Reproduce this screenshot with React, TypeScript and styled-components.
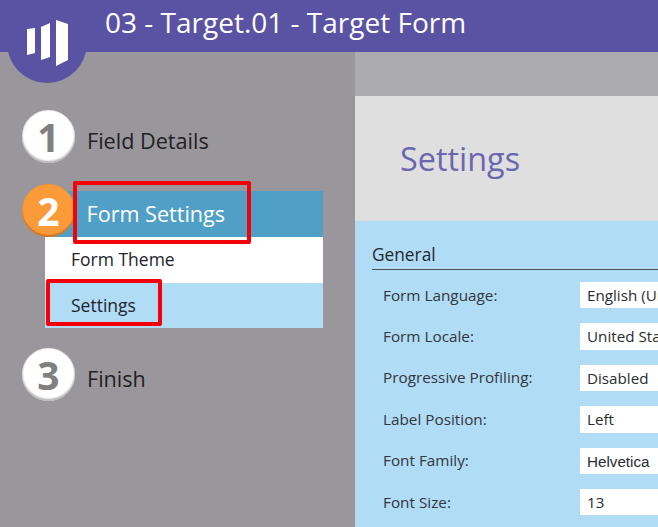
import React from "react";
import styled, { createGlobalStyle } from "styled-components";

const Global = createGlobalStyle`
  html, body { margin: 0; padding: 0; height: 100%; overflow: hidden; }
  body { font-family: "Open Sans", "Liberation Sans", sans-serif; background: #99979c; }
`;

const Page = styled.div`
  position: relative;
  width: 658px;
  height: 527px;
  overflow: hidden;
  display: flex;
  flex-direction: column;
`;

const Header = styled.header`
  height: 52px;
  flex: none;
  background: #5a52a2;
  color: #fff;
  font-size: 28px;
  line-height: 45px;
  padding-left: 105px;
  white-space: nowrap;
`;

const LogoBadge = styled.div`
  position: absolute;
  left: 7px;
  top: 3px;
  width: 80px;
  height: 80px;
  box-sizing: border-box;
  padding-left: 1px;
  border-radius: 50%;
  background: #5a52a2;
  display: flex;
  align-items: center;
  justify-content: center;
`;

const Body = styled.div`
  flex: 1;
  display: flex;
  min-height: 0;
`;

const Sidebar = styled.aside`
  width: 355px;
  flex: none;
  box-sizing: border-box;
  padding: 58px 0 0 22px;
  display: flex;
  flex-direction: column;
`;

const Step = styled.div<{ $mt?: number }>`
  display: flex;
  align-items: center;
  height: 53px;
  margin-top: ${(p) => p.$mt ?? 0}px;
  gap: 12px;
`;

const StepCircle = styled.div<{ $active?: boolean }>`
  width: 53px;
  height: 53px;
  flex: none;
  box-sizing: border-box;
  border-radius: 50%;
  background: ${(p) => (p.$active ? "#fb9a38" : "#fff")};
  box-shadow: ${(p) =>
    p.$active ? "inset 0 -2px 1px #c9752a, inset 0 0 1px #d98a3a" : "inset 0 -2px 2px #b5b5b5, inset 0 0 2px #c4c4c4"};
  color: ${(p) => (p.$active ? "#fff" : "#808080")};
  font-size: 39px;
  font-weight: 700;
  line-height: 53px;
  text-align: center;
`;

const StepLabel = styled.div`
  font-size: 21.6px;
  color: #1f1f24;
  line-height: 30px;
  position: relative;
  top: 4px;
`;

const Wizard = styled.div`
  position: relative;
  margin-top: 21px;
  height: 157px;
`;

const FloatingCircle = styled.div`
  position: absolute;
  left: 0;
  top: 0;
  z-index: 2;
`;

const Panel = styled.div`
  position: absolute;
  left: 23px;
  top: 7px;
  width: 278px;
`;

const PanelHead = styled.div`
  height: 46px;
  box-sizing: border-box;
  padding-left: 41.5px;
  background: #4f9fc6;
  color: #fff;
  font-size: 21.6px;
  line-height: 46px;
`;

const PanelItem = styled.div<{ $selected?: boolean }>`
  height: 45.5px;
  box-sizing: border-box;
  padding-left: 26px;
  background: ${(p) => (p.$selected ? "#b0dcf6" : "#fff")};
  color: #22242c;
  font-size: 17.5px;
  line-height: 45px;
`;

const Callout = styled.div<{ $l: number; $t: number; $w: number; $h: number }>`
  position: absolute;
  left: ${(p) => p.$l}px;
  top: ${(p) => p.$t}px;
  width: ${(p) => p.$w}px;
  height: ${(p) => p.$h}px;
  box-sizing: border-box;
  border: 4px solid #f40009;
  border-radius: 2px;
  z-index: 3;
`;

const Main = styled.main`
  flex: 1;
  display: flex;
  flex-direction: column;
  min-width: 0;
`;

const TopBand = styled.div`
  height: 44px;
  flex: none;
  background: #acabb0;
`;

const TitleBand = styled.div`
  height: 125px;
  flex: none;
  box-sizing: border-box;
  background: #dfdfdf;
  padding-left: 45px;
  color: #6a66b0;
  font-size: 32.4px;
  line-height: 125px;
`;

const Content = styled.div`
  flex: 1;
  background: #b0dcf6;
  padding: 20px 0 0 17px;
  overflow: hidden;
`;

const SectionTitle = styled.div`
  height: 28.5px;
  box-sizing: border-box;
  border-bottom: 1px solid #4a5058;
  color: #25272e;
  font-size: 17.3px;
  line-height: 27.5px;
`;

const Fields = styled.div`
  margin-top: 12.5px;
  display: flex;
  flex-direction: column;
  gap: 15px;
`;

const Row = styled.div`
  display: flex;
  align-items: center;
  height: 26.4px;
  padding-left: 11px;
`;

const Label = styled.div`
  width: 197px;
  flex: none;
  color: #33363a;
  font-size: 15.3px;
  line-height: 27px;
`;

const Value = styled.div<{ $helv?: boolean }>`
  flex: 1;
  height: 100%;
  background: #fff;
  padding-left: 7px;
  color: #2a2c30;
  font-family: ${(p) => (p.$helv ? '"Liberation Sans", sans-serif' : "inherit")};
  font-size: 15.2px;
  line-height: 27px;
  white-space: nowrap;
  overflow: hidden;
`;

const fields: [string, string][] = [
  ["Form Language:", "English (United States)"],
  ["Form Locale:", "United States"],
  ["Progressive Profiling:", "Disabled"],
  ["Label Position:", "Left"],
  ["Font Family:", "Helvetica"],
  ["Font Size:", "13"],
];

export default function App() {
  return (
    <Page>
      <Global />
      <Header>03 - Target.01 - Target Form</Header>
      <LogoBadge>
        <svg width="41" height="46" viewBox="0 0 41 46">
          <path fill="#fff" d="M0 9 L8 8 V33 L0 35 Z" />
          <path fill="#fff" d="M14 7 L23 3 V37 L14 40 Z" />
          <path fill="#fff" d="M29 0 L41 4 V40 L29 46 Z" />
        </svg>
      </LogoBadge>
      <Body>
        <Sidebar>
          <Step>
            <StepCircle>1</StepCircle>
            <StepLabel>Field Details</StepLabel>
          </Step>
          <Wizard>
            <Panel>
              <PanelHead>Form Settings</PanelHead>
              <PanelItem>Form Theme</PanelItem>
              <PanelItem $selected>Settings</PanelItem>
            </Panel>
            <FloatingCircle>
              <StepCircle $active>2</StepCircle>
            </FloatingCircle>
            <Callout $l={51} $t={-3} $w={178} $h={63} />
            <Callout $l={24} $t={95} $w={116} $h={47} />
          </Wizard>
          <Step $mt={7}>
            <StepCircle>3</StepCircle>
            <StepLabel>Finish</StepLabel>
          </Step>
        </Sidebar>
        <Main>
          <TopBand />
          <TitleBand>Settings</TitleBand>
          <Content>
            <SectionTitle>General</SectionTitle>
            <Fields>
              {fields.map(([label, value]) => (
                <Row key={label}>
                  <Label>{label}</Label>
                  <Value $helv={label === "Font Family:"}>{value}</Value>
                </Row>
              ))}
            </Fields>
          </Content>
        </Main>
      </Body>
    </Page>
  );
}
